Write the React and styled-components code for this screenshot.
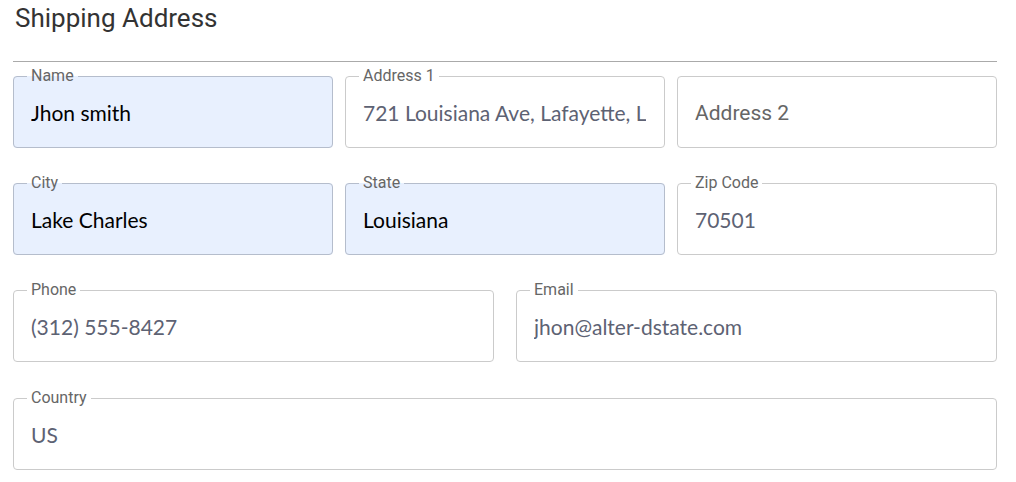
import React from "react";
import styled, { createGlobalStyle } from "styled-components";

const GlobalStyle = createGlobalStyle`
    body {
        margin: 0;
        background: #fff;
        font-family: Roboto, "Liberation Sans", sans-serif;
    }
`

const Page = styled.div`
    padding: 0 19px 0 13px;
    display: flex;
    flex-direction: column;
`

const Title = styled.h2`
    margin: 0 0 0 2px;
    font-family: Roboto, sans-serif;
    font-weight: 400;
    font-size: 26px;
    line-height: 36px;
    color: #333;
`

const Divider = styled.hr`
    margin: 25px 0 5px;
    border: none;
    border-top: 1px solid #aaa;
    height: 0;
`

const Rows = styled.div`
    display: flex;
    flex-direction: column;
    gap: 26px;
`

const Row = styled.div`
    display: grid;
    grid-template-columns: ${props => `repeat(${props.cols}, 1fr)`};
    gap: ${props => props.gap}px;
    &:last-child {
        margin-top: 1px;
    }
`

const Field = styled.fieldset`
    margin: ${props => props.notched ? '0' : '9px 0 0'};
    padding: 0 13px;
    min-width: 0;
    border: 1px solid ${props => props.filled ? '#b5bdcc' : '#cbcbcb'};
    border-radius: 4px;
    background: ${props => props.filled ? '#e8f0fe' : '#fff'};
`

const Legend = styled.legend`
    padding: 0 4px;
    font-family: Roboto, sans-serif;
    font-size: 16px;
    line-height: 18px;
    color: #666;
`

const Input = styled.input`
    display: block;
    width: 100%;
    height: ${props => props.notched ? '62px' : '70px'};
    box-sizing: border-box;
    margin: 0;
    padding: ${props => props.notched ? '0 5px 8px 4px' : '0 5px 2px 4px'};
    border: none;
    outline: none;
    background: transparent;
    font-family: Lato, "Liberation Sans", sans-serif;
    font-size: 21px;
    color: ${props => props.filled ? '#000' : '#5d6273'};

    &::placeholder {
        font-family: Roboto, sans-serif;
        color: #666;
        opacity: 1;
    }
`

const rows = [
    {
        cols: 3, gap: 12, fields: [
            { label: "Name", value: "Jhon smith", filled: true },
            { label: "Address 1", value: "721 Louisiana Ave, Lafayette, LA 70501" },
            { placeholder: "Address 2" },
        ]
    },
    {
        cols: 3, gap: 12, fields: [
            { label: "City", value: "Lake Charles", filled: true },
            { label: "State", value: "Louisiana", filled: true },
            { label: "Zip Code", value: "70501" },
        ]
    },
    {
        cols: 2, gap: 22, fields: [
            { label: "Phone", value: "(312) 555-8427" },
            { label: "Email", value: "jhon@alter-dstate.com" },
        ]
    },
    {
        cols: 1, gap: 0, fields: [
            { label: "Country", value: "US" },
        ]
    },
];

const TextField = ({ label, value, placeholder, filled }) => (
    <Field filled={filled} notched={!!label}>
        {label && <Legend>{label}</Legend>}
        <Input
            filled={filled}
            notched={!!label}
            defaultValue={value}
            placeholder={placeholder}
        />
    </Field>
);

const App = () => {
    return (
        <>
            <GlobalStyle />
            <Page>
                <Title>Shipping Address</Title>
                <Divider />
                <Rows>
                    {rows.map((row, i) => (
                        <Row key={i} cols={row.cols} gap={row.gap}>
                            {row.fields.map((f, j) => (
                                <TextField key={j} {...f} />
                            ))}
                        </Row>
                    ))}
                </Rows>
            </Page>
        </>
    )
}

export default App;
